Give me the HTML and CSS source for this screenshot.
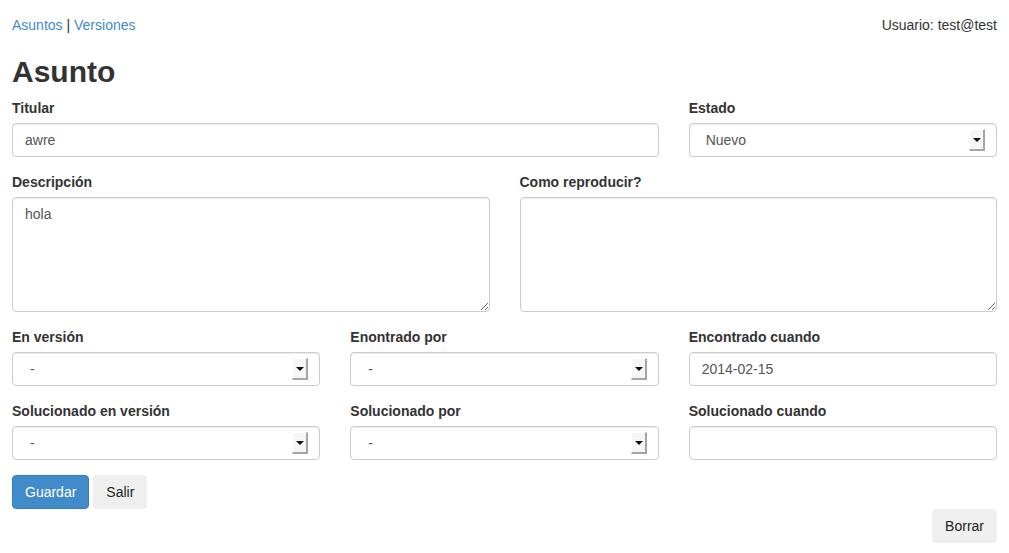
FILE: index.html
```html
<!DOCTYPE html>
<html lang="es">
<head>
<meta charset="utf-8">
<title>Asunto</title>
<link rel="stylesheet" href="styles.css">
</head>
<body>
<div class="page">
  <div class="topbar">
    <div class="nav"><a href="#">Asuntos</a> | <a href="#">Versiones</a></div>
    <div class="user">Usuario: test@test</div>
  </div>
  <h2 class="title">Asunto</h2>
  <form class="form">
    <div class="grid">
      <div class="group span2">
        <label>Titular</label>
        <input class="control" type="text" value="awre">
      </div>
      <div class="group">
        <label>Estado</label>
        <div class="select"><span class="select-text">Nuevo</span><span class="arrow"></span></div>
      </div>
    </div>
    <div class="grid two">
      <div class="group">
        <label>Descripción</label>
        <textarea class="control area">hola</textarea>
      </div>
      <div class="group">
        <label>Como reproducir?</label>
        <textarea class="control area"></textarea>
      </div>
    </div>
    <div class="grid">
      <div class="group">
        <label>En versión</label>
        <div class="select"><span class="select-text dash">-</span><span class="arrow"></span></div>
      </div>
      <div class="group">
        <label>Enontrado por</label>
        <div class="select"><span class="select-text dash">-</span><span class="arrow"></span></div>
      </div>
      <div class="group">
        <label>Encontrado cuando</label>
        <input class="control" type="text" value="2014-02-15">
      </div>
    </div>
    <div class="grid">
      <div class="group">
        <label>Solucionado en versión</label>
        <div class="select"><span class="select-text dash">-</span><span class="arrow"></span></div>
      </div>
      <div class="group">
        <label>Solucionado por</label>
        <div class="select"><span class="select-text dash">-</span><span class="arrow"></span></div>
      </div>
      <div class="group">
        <label>Solucionado cuando</label>
        <input class="control" type="text" value="">
      </div>
    </div>
    <div class="actions">
      <button type="button" class="btn primary">Guardar</button>
      <button type="button" class="btn plain">Salir</button>
    </div>
    <div class="actions right">
      <button type="button" class="btn plain">Borrar</button>
    </div>
  </form>
</div>
</body>
</html>
```
FILE: styles.css
```css
* { box-sizing: border-box; }
html, body { margin: 0; padding: 0; background: #fff; }
body {
  font-family: "Liberation Sans", Arial, sans-serif;
  font-size: 14px;
  line-height: 20px;
  color: #333;
}
.page { padding: 15px 12px 0 12px; }
.topbar { display: flex; justify-content: space-between; height: 20px; }
.nav a { color: #428bca; text-decoration: none; }
.user { color: #333; }
.title {
  font-size: 30px;
  font-weight: bold;
  line-height: 33px;
  margin: 20px 0 10px 0;
  color: #333;
}
.form { margin: 0; }
.grid {
  display: grid;
  grid-template-columns: 1fr 1fr 1fr;
  column-gap: 30px;
}
.grid.two { grid-template-columns: 1fr 1fr; }
.span2 { grid-column: span 2; }
.group { margin-bottom: 15px; display: flex; flex-direction: column; }
label { font-weight: bold; margin-bottom: 5px; display: block; height: 20px; }
.control {
  display: block;
  width: 100%;
  height: 34px;
  padding: 6px 12px;
  font: inherit;
  font-size: 14px;
  line-height: 20px;
  color: #555;
  border: 1px solid #ccc;
  border-radius: 4px;
  background: #fff;
  box-shadow: inset 0 1px 1px rgba(0,0,0,0.075);
  outline: none;
}
.area { height: 115px; resize: vertical; padding: 6px 12px; }
.select {
  position: relative;
  height: 34px;
  border: 1px solid #ccc;
  border-radius: 4px;
  background: #fff;
  box-shadow: inset 0 1px 1px rgba(0,0,0,0.075);
  display: flex;
  align-items: center;
  padding-left: 16px;
  color: #555;
}
.select-text { display: block; }
.select-text.dash { padding-left: 1px; }
.arrow {
  position: absolute;
  right: 11px;
  top: 5px;
  width: 16px;
  height: 22px;
  background: #f6f6f6;
  border-right: 2px solid #a5a5a5;
  border-bottom: 2px solid #a5a5a5;
  border-top: 1px solid #fff;
  border-left: 1px solid #fff;
}
.arrow::after {
  content: "";
  position: absolute;
  left: 3px;
  top: 8px;
  border-left: 4px solid transparent;
  border-right: 4px solid transparent;
  border-top: 4px solid #111;
}
.actions { display: flex; gap: 4px; }
.actions.right { justify-content: flex-end; }
.btn {
  height: 34px;
  padding: 6px 12px;
  font: inherit;
  font-size: 14px;
  line-height: 20px;
  border-radius: 4px;
  cursor: pointer;
}
.btn.primary { background: #428bca; border: 1px solid #357ebd; color: #fff; }
.btn.plain { background: #efefef; border: 1px solid #efefef; color: #222; }
```
